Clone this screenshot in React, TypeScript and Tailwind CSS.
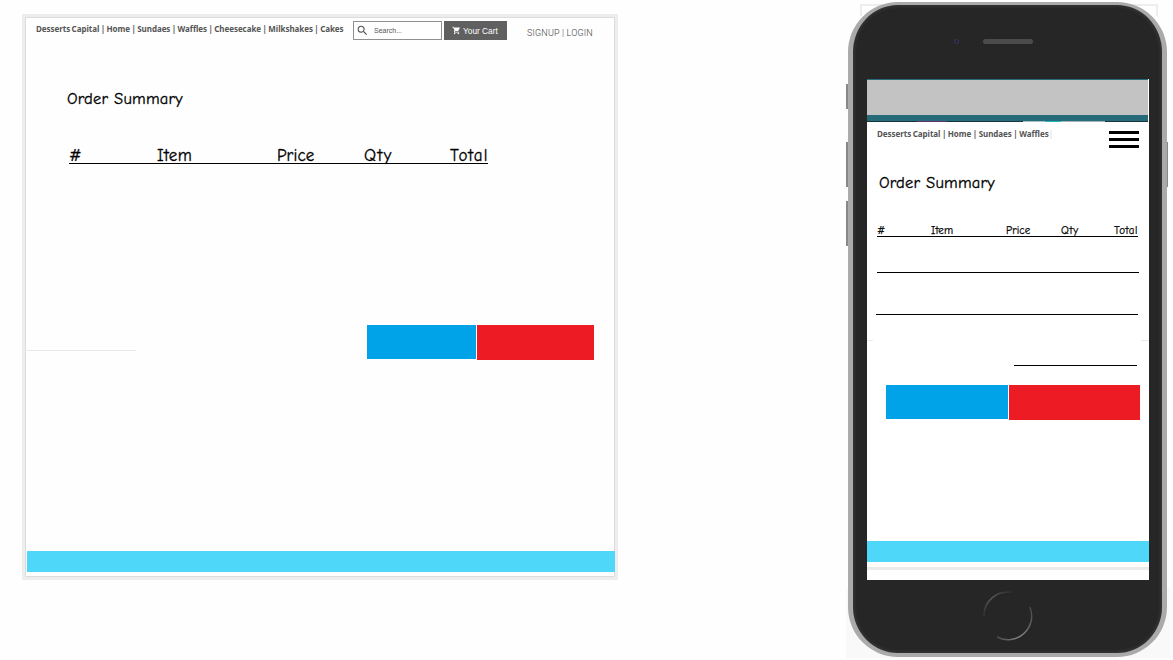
import { MdSearch, MdShoppingCart } from "react-icons/md";

const nav = "font-['Noto_Sans'] font-bold text-[#555] whitespace-pre";
const hand =
  "font-['Comic_Sans_MS','Comic_Neue','Noto_Sans',sans-serif] text-black whitespace-nowrap";

function Actions({ blue, red }: { blue: string; red: string }) {
  return (
    <div className="flex items-start gap-px">
      <button className={`h-[34px] bg-[#00a2e8] ${blue}`} aria-label="Continue" />
      <button className={`h-[35px] bg-[#ed1c24] ${red}`} aria-label="Cancel" />
    </div>
  );
}

function Desktop() {
  return (
    <section className="ml-[22px] mt-[14px] flex h-[566px] w-[596px] flex-col border-[3px] border-[#ededed] bg-[#fefefe]">
      <div className="flex min-h-0 flex-1 flex-col border border-[#dcdcdc]">
        <header className="flex h-[30px] items-start pl-[10px]">
          <nav className={`${nav} mt-[5px] w-[317px] text-[8px] leading-[12px] tracking-[-0.05px] [word-spacing:-0.58px]`}>
            Desserts Capital | Home | Sundaes | Waffles | Cheesecake | Milkshakes | Cakes
          </nav>
          <div className="mt-[3px] flex h-[19px] w-[89px] items-center border border-[#909090] bg-white pl-[2px] text-[#555]">
            <MdSearch className="size-[13px]" />
            <span className="ml-[5px] font-['Liberation_Sans'] text-[7px] leading-none">Search...</span>
          </div>
          <button className="ml-[2px] mt-[3px] flex h-[19px] w-[63px] items-center bg-[#606060] pl-[8px] text-white">
            <MdShoppingCart className="size-[9px]" />
            <span className="ml-[2px] mt-px font-['Liberation_Sans'] text-[8.3px] leading-none whitespace-nowrap">Your Cart</span>
          </button>
          <span className="ml-[20px] mt-[9px] font-['Roboto'] text-[9px] font-light leading-[13px] tracking-[0.16px] text-[#444] whitespace-nowrap">
            SIGNUP | LOGIN
          </span>
        </header>
        <h1 className={`${hand} ml-[41px] mt-[39px] h-[24px] text-[16.5px] leading-[24px] tracking-[0.22px] [-webkit-text-stroke:0.3px_black]`}>
          Order Summary
        </h1>
        <div className={`${hand} ml-[43px] mt-[33px] grid h-[20px] w-[419px] grid-cols-[88px_120px_87px_86px_38px] border-b border-black text-[17px] leading-[24px] tracking-[0.4px] [-webkit-text-stroke:0.3px_black]`}>
          <span>#</span>
          <span>Item</span>
          <span className="tracking-[0.1px]">Price</span>
          <span className="tracking-[1.4px]">Qty</span>
          <span className="tracking-[1.1px]">Total</span>
        </div>
        <div className="mt-[161px] flex h-[35px] justify-between pr-[20px]">
          <div className="-ml-1 h-[26px] w-[114px] border-b border-[#e9e9e9]" />
          <Actions blue="w-[109px]" red="w-[117px]" />
        </div>
        <footer className="mb-[4px] mt-auto ml-px -mr-px h-[21px] bg-[#4fd7fa]" />
      </div>
    </section>
  );
}

function Phone() {
  return (
    <section className="relative h-[658px] w-[325px]">
      <div className="absolute inset-x-0 bottom-0 h-[70px] bg-[#f9f9f9]" />
      <div className="absolute left-[14px] top-[4px] h-[12px] w-[298px] border-2 border-b-0 border-[#eee]" />
      <div className="absolute left-0 top-[84px] h-[25px] w-1 bg-[#888]" />
      <div className="absolute left-0 top-[142px] h-[45px] w-1 bg-[#888]" />
      <div className="absolute left-0 top-[201px] h-[45px] w-1 bg-[#888]" />
      <div className="absolute right-[3px] top-[142px] h-[45px] w-1 bg-[#888]" />
      <div className="relative ml-[2px] mt-[2px] flex h-[655px] w-[319px] flex-col rounded-[50px] border-x-[5px] border-t-[3px] border-b-[4px] border-[#aaa] bg-[#262626] px-[14px] shadow-[inset_0_0_3px_2px_#333]">
        <div className="flex h-[74px] shrink-0 items-start pl-[87px] pt-[34px]">
          <div className="size-[5px] rounded-full border border-[#3a3858] bg-[#222138]" />
          <div className="ml-[24px] h-[5px] w-[50px] rounded-sm bg-[#4b4b4b]" />
        </div>
        <div className="flex h-[501px] w-[282px] shrink-0 flex-col bg-white">
          <div className="mr-px h-[36px] shrink-0 border-t border-[#266b78] bg-[#c3c3c3]" />
          <div className="mr-px h-[6px] shrink-0 bg-[#266b78]" />
          <div className="mr-px flex h-px shrink-0 bg-[#17343b]">
            <span className="ml-[50px] w-[30px] bg-[#61316f]" />
            <span className="ml-[76px] w-[22px] bg-[#a5bfc3]" />
            <span className="w-[16px] bg-[#1eb5c1]" />
            <span className="w-[44px] bg-[#a5b5b8]" />
          </div>
          <header className="flex h-[38px] shrink-0 justify-between px-[10px]">
            <nav className={`${nav} mt-[6px] text-[8px] leading-[12px] tracking-[-0.04px] [word-spacing:-0.55px]`}>
              Desserts Capital | Home | Sundaes | Waffles<span className="font-normal text-gray-300">|</span>
            </nav>
            <div className="mt-[9px] flex w-[30px] flex-col gap-[4px]">
              <span className="h-[3px] bg-black" />
              <span className="h-[3px] bg-black" />
              <span className="h-[3px] bg-black" />
            </div>
          </header>
          <h1 className={`${hand} ml-[12px] mt-[11px] h-[24px] shrink-0 text-[16.5px] leading-[24px] tracking-[0.22px] [-webkit-text-stroke:0.3px_black]`}>
            Order Summary
          </h1>
          <div className={`${hand} ml-[10px] mt-[28px] grid h-[14px] w-[261px] shrink-0 grid-cols-[54px_75px_55px_53px_24px] border-b border-black text-[11px] leading-[16px] tracking-[0.1px] [-webkit-text-stroke:0.25px_black]`}>
            <span>#</span>
            <span>Item</span>
            <span>Price</span>
            <span className="tracking-[0.6px]">Qty</span>
            <span className="tracking-[0.5px]">Total</span>
          </div>
          <div className="ml-[10px] h-[36px] w-[262px] shrink-0 border-b border-black" />
          <div className="ml-[9px] h-[42px] w-[262px] shrink-0 border-b border-black" />
          <div className="flex h-[51px] shrink-0 justify-between">
            <span className="h-[26px] w-[6px] border-b border-[#ececec]" />
            <span className="ml-auto h-[51px] w-[123px] border-b border-black" />
            <span className="ml-[4px] h-[26px] w-[8px] border-b border-[#ececec]" />
          </div>
          <div className="ml-[19px] mt-[19px]"><Actions blue="w-[122px]" red="w-[131px]" /></div>
          <footer className="mb-[5px] mt-auto h-[21px] shrink-0 bg-[#4fd7fa]" />
          <div className="mb-[10px] h-[3px] shrink-0 bg-[#ebebeb]" />
        </div>
        <svg className="ml-[116px] mt-[11px] h-[50px] w-[50px] shrink-0" viewBox="0 0 50 50" fill="none">
          <defs>
            <linearGradient id="ring-top" x1="0" y1="1" x2="1" y2="0">
              <stop stopColor="#303030" />
              <stop offset=".5" stopColor="#5a5a5a" />
              <stop offset="1" stopColor="#303030" />
            </linearGradient>
            <linearGradient id="ring-bottom" x1="1" y1="0" x2="0" y2="1">
              <stop stopColor="#444" />
              <stop offset=".65" stopColor="#888" />
              <stop offset="1" stopColor="#444" />
            </linearGradient>
          </defs>
          <path d="M1 26A23.7 23.7 0 0 1 28 1.2" stroke="url(#ring-top)" strokeWidth="1.5" />
          <path d="M46.9 16A23.7 23.7 0 0 1 14 46" stroke="url(#ring-bottom)" strokeWidth="1.5" />
        </svg>
      </div>
    </section>
  );
}

export default function App() {
  return (
    <main className="flex h-[660px] w-[1173px] items-start justify-between overflow-hidden bg-[#fefefe] pr-[2px]">
      <Desktop />
      <Phone />
    </main>
  );
}
